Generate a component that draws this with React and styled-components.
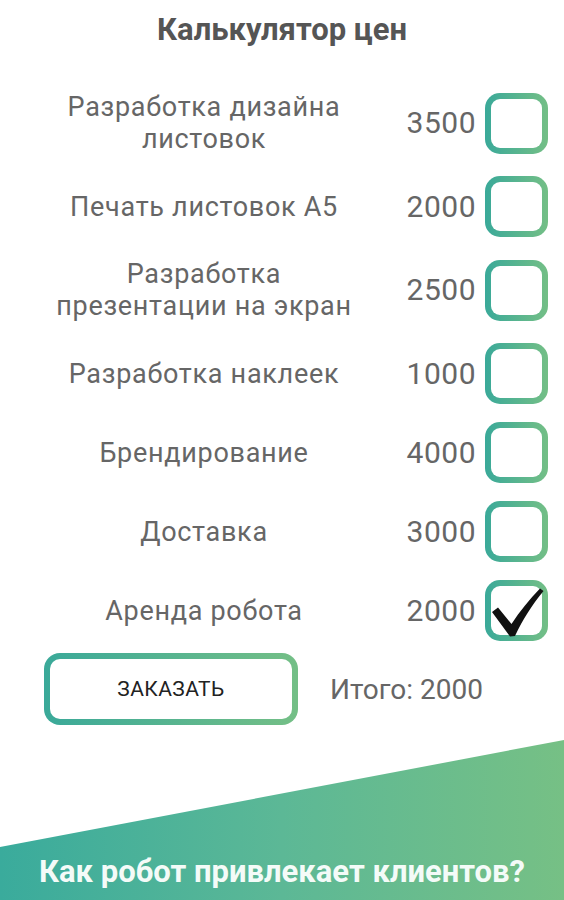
import React from "react";
import styled, { createGlobalStyle } from "styled-components";

const Global = createGlobalStyle`
  html, body { margin: 0; padding: 0; background: #fff; }
  body { font-family: Roboto, "Noto Sans", sans-serif; }
`;

const Page = styled.div`
  width: 564px;
  height: 900px;
  display: flex;
  flex-direction: column;
  background: #fff;
  overflow: hidden;
`;

const Title = styled.h1`
  margin: 0;
  padding-top: 11px;
  height: 88px;
  box-sizing: border-box;
  text-align: center;
  font-size: 31px;
  font-weight: 700;
  color: #555;
  line-height: 38px;
`;

const List = styled.div`
  display: grid;
  grid-template-columns: 352px 87px 63px;
  column-gap: 9px;
  row-gap: 18px;
  padding-left: 28px;
  align-items: center;
`;

const Label = styled.div`
  text-align: center;
  font-size: 27px;
  line-height: 32px;
  color: #666;
  padding: ${(p) => (p.$two ? "3px 0" : "0")};
  letter-spacing: 0.7px;
`;

const Price = styled.div`
  text-align: right;
  font-size: 30px;
  letter-spacing: 0.5px;
  color: #666;
  line-height: 34px;
`;

const Box = styled.div`
  width: 63px;
  height: 61px;
  box-sizing: border-box;
  padding: 6px;
  border-radius: 15px;
  background: linear-gradient(90deg, #3aa999 0%, #74bf86 100%);
  position: relative;
`;

const BoxInner = styled.div`
  width: 100%;
  height: 100%;
  background: #fff;
  border-radius: 9px;
`;

const Check = styled.svg`
  position: absolute;
  left: 0;
  top: 0;
  width: 63px;
  height: 61px;
`;

const Footer = styled.div`
  display: flex;
  align-items: center;
  padding: 12px 0 0 44px;
  gap: 32px;
`;

const OrderButton = styled.div`
  width: 254px;
  height: 72px;
  box-sizing: border-box;
  padding: 6px;
  border-radius: 16px;
  background: linear-gradient(90deg, #3aa999 0%, #74bf86 100%);
`;

const OrderInner = styled.div`
  height: 100%;
  background: #fff;
  border-radius: 10px;
  display: flex;
  align-items: center;
  justify-content: center;
  font-size: 21px;
  color: #222;
  letter-spacing: 0.4px;
`;

const Total = styled.div`
  font-size: 28px;
  color: #666;
`;

const Banner = styled.div`
  margin-top: auto;
  height: 160px;
  background: linear-gradient(90deg, #3aab9c 0%, #5cb896 50%, #76c085 100%);
  clip-path: polygon(0 107px, 100% 0, 100% 100%, 0 100%);
  display: flex;
  align-items: flex-end;
  justify-content: center;
  padding-bottom: 11px;
  box-sizing: border-box;
`;

const BannerText = styled.div`
  color: #f4fbf8;
  font-size: 31px;
  font-weight: 700;
  line-height: 34px;
`;

const items = [
  { label: ["Разработка дизайна", "листовок"], price: 3500 },
  { label: ["Печать листовок А5"], price: 2000 },
  { label: ["Разработка", "презентации на экран"], price: 2500 },
  { label: ["Разработка наклеек"], price: 1000 },
  { label: ["Брендирование"], price: 4000 },
  { label: ["Доставка"], price: 3000 },
  { label: ["Аренда робота"], price: 2000, checked: true },
];

function CheckBox({ checked }) {
  return (
    <Box>
      <BoxInner />
      {checked && (
        <Check viewBox="0 0 63 61">
          <path
            d="M7 32 L13 27.5 L26.5 44 C35 31 44 20 55 8.5 L58.5 11 C47 25 38 39 30 56 L25 56.5 Z"
            fill="#111"
          />
        </Check>
      )}
    </Box>
  );
}

export default function App() {
  return (
    <Page>
      <Global />
      <Title>Калькулятор цен</Title>
      <List>
        {items.map((it, i) => (
          <React.Fragment key={i}>
            <Label $two={it.label.length > 1}>
              {it.label.map((l, j) => (
                <div key={j}>{l}</div>
              ))}
            </Label>
            <Price>{it.price}</Price>
            <CheckBox checked={it.checked} />
          </React.Fragment>
        ))}
      </List>
      <Footer>
        <OrderButton>
          <OrderInner>ЗАКАЗАТЬ</OrderInner>
        </OrderButton>
        <Total>Итого: 2000</Total>
      </Footer>
      <Banner>
        <BannerText>Как робот привлекает клиентов?</BannerText>
      </Banner>
    </Page>
  );
}
